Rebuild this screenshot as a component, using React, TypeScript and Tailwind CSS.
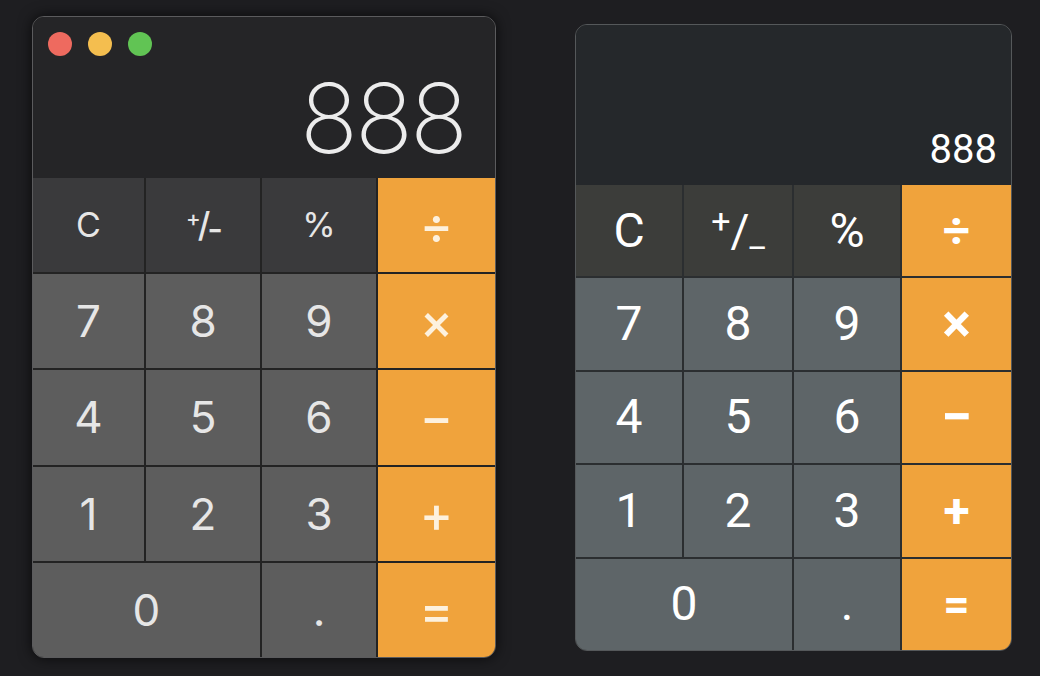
import React from "react";

const inter = { fontFamily: '"Inter", "Liberation Sans", sans-serif' } as const;
const roboto = { fontFamily: 'Roboto, "Liberation Sans", sans-serif' } as const;

function LeftKey({
  children,
  kind,
  wide,
}: {
  children: React.ReactNode;
  kind: "fn" | "num" | "op";
  wide?: boolean;
}) {
  const bg =
    kind === "fn"
      ? "bg-[#3a3a3c] text-[34px] font-normal"
      : kind === "num"
        ? "bg-[#5d5d5d] text-[44px] font-normal"
        : "bg-[#f0a33c] text-[#fdf1de] text-[50px] font-medium";
  return (
    <div className={`flex items-center justify-center leading-none ${bg} ${wide ? "col-span-2" : ""}`}>
      {children}
    </div>
  );
}

function RightKey({
  children,
  kind,
  wide,
}: {
  children: React.ReactNode;
  kind: "fn" | "num" | "op";
  wide?: boolean;
}) {
  const bg = kind === "fn" ? "bg-[#3c3d3a]" : kind === "num" ? "bg-[#5e6568]" : "bg-[#f0a33c] font-bold";
  return (
    <div
      className={`flex items-center justify-center leading-none text-[48px] text-white ${bg} ${wide ? "col-span-2" : ""}`}
    >
      {children}
    </div>
  );
}

function LeftCalc() {
  return (
    <div
      className="mt-[16px] w-[464px] h-[642px] flex flex-col rounded-[12px] overflow-hidden border border-[#5b5b5d] bg-[#232323] shadow-[0_0_14px_rgba(0,0,0,0.7)] text-[#e6e6e6]"
      style={inter}
    >
      <div className="h-[161px] bg-[#252527] flex flex-col">
        <div className="flex gap-[16px] pl-[15px] pt-[15px]">
          <div className="w-[24px] h-[24px] rounded-full bg-[#ee6a5f]" />
          <div className="w-[24px] h-[24px] rounded-full bg-[#f4be4f]" />
          <div className="w-[24px] h-[24px] rounded-full bg-[#61c454]" />
        </div>
        <div className="flex-1" />
        <div className="flex justify-end pr-[30px] pb-[12px] text-[96px] leading-none font-extralight tracking-[-3px] text-[#ececec]">
          888
        </div>
      </div>
      <div className="flex-1 grid grid-cols-[111px_114px_114px_1fr] grid-rows-5 gap-[2px]">
        <LeftKey kind="fn">C</LeftKey>
        <LeftKey kind="fn">
          <span className="flex items-center text-[34px] font-medium tracking-[-3px]">
            <span className="text-[22px] -translate-y-[7px]">+</span>
            <span>/</span>
            <span className="translate-y-[4px]">-</span>
          </span>
        </LeftKey>
        <LeftKey kind="fn">%</LeftKey>
        <LeftKey kind="op">÷</LeftKey>
        <LeftKey kind="num">7</LeftKey>
        <LeftKey kind="num">8</LeftKey>
        <LeftKey kind="num">9</LeftKey>
        <LeftKey kind="op">×</LeftKey>
        <LeftKey kind="num">4</LeftKey>
        <LeftKey kind="num">5</LeftKey>
        <LeftKey kind="num">6</LeftKey>
        <LeftKey kind="op">−</LeftKey>
        <LeftKey kind="num">1</LeftKey>
        <LeftKey kind="num">2</LeftKey>
        <LeftKey kind="num">3</LeftKey>
        <LeftKey kind="op">+</LeftKey>
        <LeftKey kind="num" wide>
          0
        </LeftKey>
        <LeftKey kind="num">.</LeftKey>
        <LeftKey kind="op">=</LeftKey>
      </div>
    </div>
  );
}

function RightCalc() {
  return (
    <div
      className="mt-[24px] w-[437px] h-[627px] flex flex-col rounded-[12px] overflow-hidden border-[1.5px] border-[#55585a] bg-[#2b2e30]"
      style={roboto}
    >
      <div className="h-[160px] bg-[#25282b] flex flex-col justify-end">
        <div className="flex justify-end pr-[14px] pb-[15px] text-[40px] leading-none text-white">888</div>
      </div>
      <div className="flex-1 grid grid-cols-[106px_108px_106px_1fr] grid-rows-5 gap-[2px]">
        <RightKey kind="fn">C</RightKey>
        <RightKey kind="fn">
          <span className="flex items-center">
            <span className="text-[34px] -translate-y-[10px]">+</span>
            <span className="text-[46px]">/</span>
            <span className="text-[34px] translate-y-[4px]">_</span>
          </span>
        </RightKey>
        <RightKey kind="fn">%</RightKey>
        <RightKey kind="op">
          <span className="text-[48px]">÷</span>
        </RightKey>
        <RightKey kind="num">7</RightKey>
        <RightKey kind="num">8</RightKey>
        <RightKey kind="num">9</RightKey>
        <RightKey kind="op">
          <span className="text-[54px]">×</span>
        </RightKey>
        <RightKey kind="num">4</RightKey>
        <RightKey kind="num">5</RightKey>
        <RightKey kind="num">6</RightKey>
        <RightKey kind="op">
          <span className="text-[56px]">−</span>
        </RightKey>
        <RightKey kind="num">1</RightKey>
        <RightKey kind="num">2</RightKey>
        <RightKey kind="num">3</RightKey>
        <RightKey kind="op">
          <span className="text-[48px]">+</span>
        </RightKey>
        <RightKey kind="num" wide>
          0
        </RightKey>
        <RightKey kind="num">.</RightKey>
        <RightKey kind="op">
          <span className="text-[46px]">=</span>
        </RightKey>
      </div>
    </div>
  );
}

export default function App() {
  return (
    <div className="w-[1040px] h-[676px] bg-[#1e1e21] flex items-start pl-[32px] gap-[79px] overflow-hidden">
      <LeftCalc />
      <RightCalc />
    </div>
  );
}
